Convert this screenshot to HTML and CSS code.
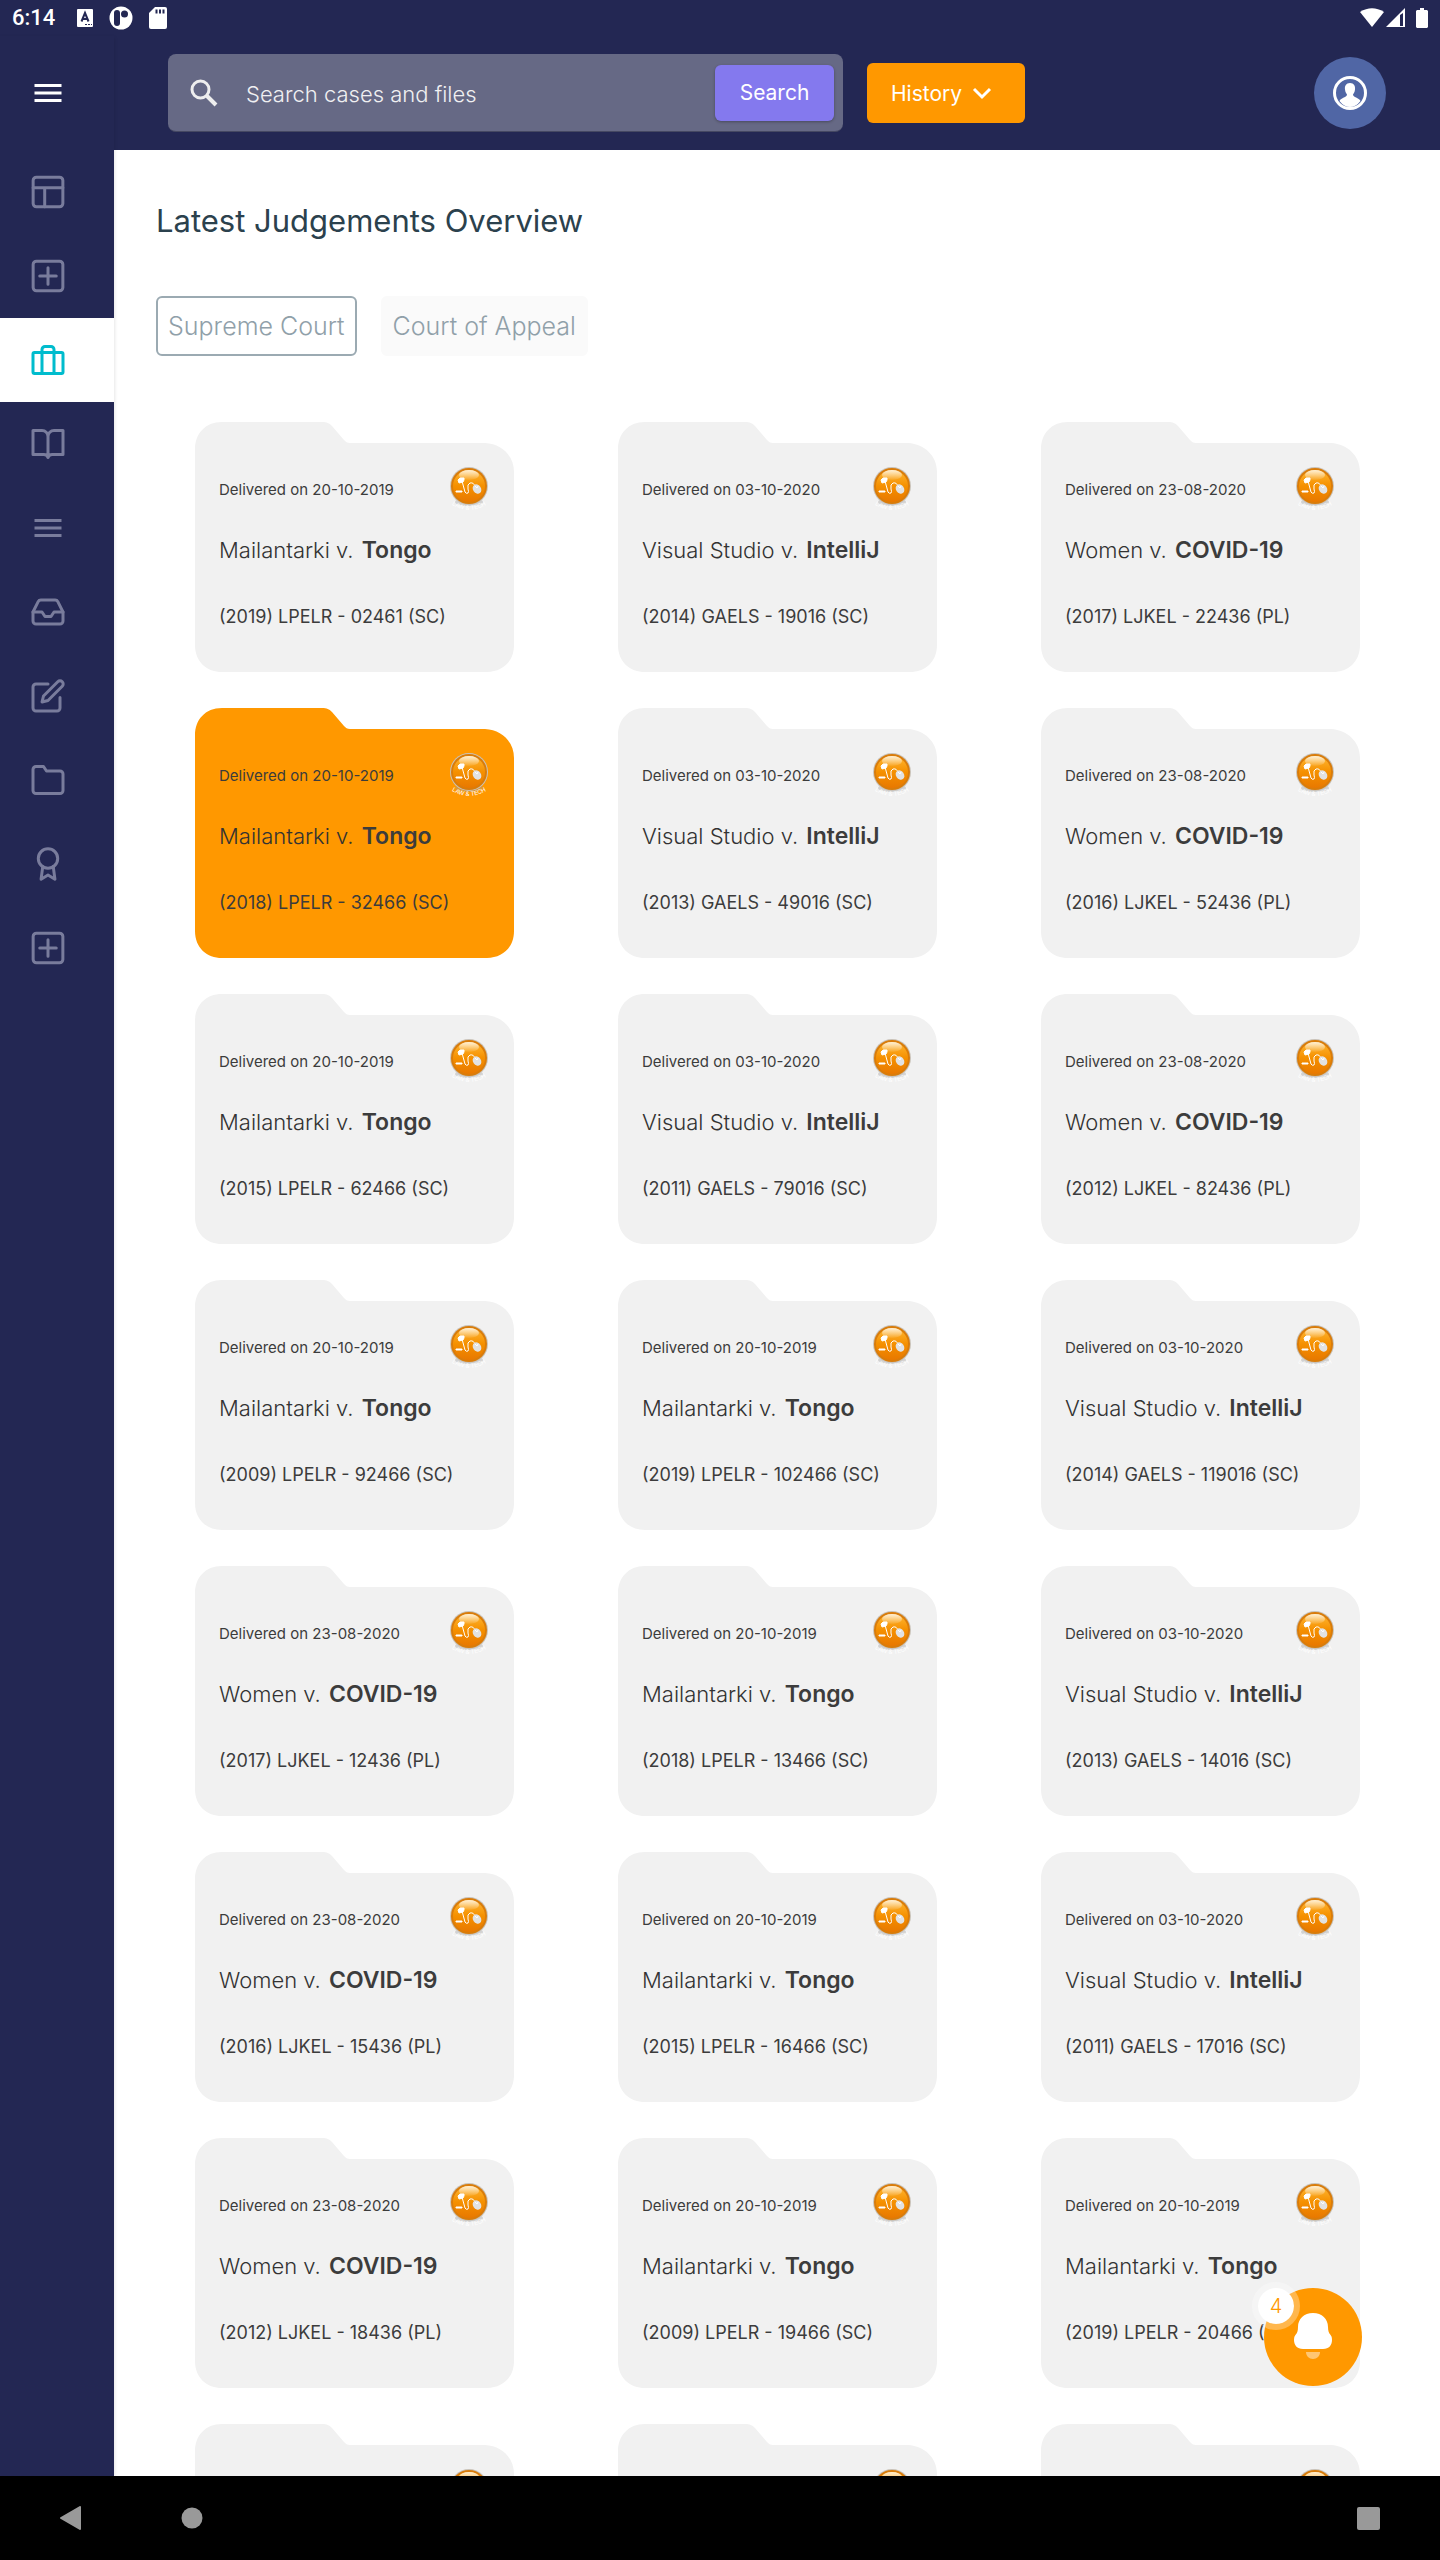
FILE: index.html
```html
<!DOCTYPE html>
<html lang="en">
<head>
<meta charset="utf-8">
<meta name="viewport" content="width=device-width, initial-scale=1">
<title>Latest Judgements Overview</title>
<link rel="stylesheet" href="styles.css">
</head>
<body>
<svg class="defs" aria-hidden="true">
  <defs>
    <linearGradient id="orb" x1="0" y1="0" x2="0" y2="1">
      <stop offset="0" stop-color="#ffb733"/><stop offset="0.5" stop-color="#f59000"/><stop offset="1" stop-color="#e87800"/>
    </linearGradient>
    <linearGradient id="gloss" x1="0" y1="0" x2="0" y2="1">
      <stop offset="0" stop-color="#fff" stop-opacity="0.8"/><stop offset="1" stop-color="#fff" stop-opacity="0.05"/>
    </linearGradient>
    <path id="arc" d="M0 37Q20 51 40 37"/>
    <symbol id="seal" viewBox="0 0 40 48">
      <ellipse cx="20" cy="36" rx="14" ry="4" fill="#999" opacity="0.35"/>
      <circle cx="20" cy="20" r="19" fill="#c9c2b8"/>
      <circle cx="20" cy="20" r="18" fill="#d97c0a"/>
      <circle cx="20" cy="20" r="16" fill="url(#orb)"/>
      <ellipse cx="20" cy="9" rx="10" ry="5" fill="url(#gloss)"/>
      <path d="M9 14l2-2h4v2l-1 2-4 1zM7 25h6v1H7z" fill="#fff" stroke="#fff" stroke-width="1"/>
      <path d="M13 15l3 11q1 2 3 1 1-1 0-4-1-5 2-6 4-1 5 4" fill="none" stroke="#fff" stroke-width="1"/>
      <ellipse cx="28" cy="23" rx="4" ry="5" fill="#e2e2e2" transform="rotate(-35 28 23)"/>
      <path d="M26 20l2 2 1-2" fill="none" stroke="#fff" stroke-width="1"/>
    </symbol>
  </defs>
</svg>

<div class="status">
  <span class="clock">6:14</span>
  <svg width="16" height="18" viewBox="0 0 16 18"><rect width="16" height="18" rx="1" fill="#fff"/><path d="M4.500 12.500L8 4l3.500 8.500M5.800 10h4.400" fill="none" stroke="#232753" stroke-width="2"/><path d="M8 15.500h7" stroke="#232753" stroke-dasharray="2 1"/></svg>
  <svg width="24" height="24" viewBox="0 0 24 24"><circle cx="12" cy="12" r="11.500" fill="#fff"/><rect x="5" y="4" width="6" height="16" rx="3" fill="#232753"/><circle cx="15.500" cy="8" r="3.500" fill="#232753"/></svg>
  <svg width="18" height="22" viewBox="0 0 18 22"><path d="M6 0h10a2 2 0 0 1 2 2v18a2 2 0 0 1-2 2H2a2 2 0 0 1-2-2V6z" fill="#fff"/><path d="M7.500 2.500v4M11 2.500v4M14.500 2.500v4" stroke="#232753" stroke-width="2"/></svg>
  <span class="spacer"></span>
  <svg class="signal" width="46" height="20" viewBox="0 0 46 20"><path d="M0 4Q12-3.500 24 4L12 19z" fill="#fff"/><path d="M26 19L45 0V19z" fill="#fff"/><path d="M40 7l3-2v13h-3z" fill="#232753"/></svg>
  <svg width="12" height="20" viewBox="0 0 12 20"><path d="M4 0h4v2h3l1 1v16l-1 1H1l-1-1V3l1-1h3z" fill="#fff"/></svg>
</div>

<nav class="side" aria-label="Main">
  <button class="side-item toggle" type="button" aria-label="Menu"><svg class="ic" viewBox="0 0 24 24"><path class="flat" d="M3 7h18M3 12h18M3 17h18"/></svg></button>
  <a class="side-item" href="#" aria-label="Dashboard"><svg class="ic" viewBox="1.100 1.100 21.800 21.800"><rect x="3" y="3" width="18" height="18" rx="2"/><path d="M3 9.500h18M10 21V10"/></svg></a>
  <a class="side-item" href="#" aria-label="Add"><svg class="ic" viewBox="1.100 1.100 21.800 21.800"><rect x="3" y="3" width="18" height="18" rx="2"/><path d="M12 7v10M7 12h10"/></svg></a>
  <a class="side-item active" href="#" aria-label="Cases"><svg class="ic" viewBox="0 0 24 24"><rect x="2" y="7" width="20" height="14" rx="1"/><path d="M16 21V5a2 2 0 0 0-2-2h-4a2 2 0 0 0-2 2v16"/></svg></a>
  <a class="side-item" href="#" aria-label="Library"><svg class="ic" viewBox="0 0 24 24"><path d="M2 3h6a4 4 0 0 1 4 4v14a3 3 0 0 0-3-2H2zM22 3h-6a4 4 0 0 0-4 4v14a3 3 0 0 1 3-2h7z"/></svg></a>
  <a class="side-item" href="#" aria-label="List"><svg class="ic" viewBox="0 0 24 24"><path class="flat" d="M3 7h18M3 12h18M3 17h18"/></svg></a>
  <a class="side-item" href="#" aria-label="Inbox"><svg class="ic" viewBox="0 0 24 24"><path d="M22 12h-6l-2 3h-4l-2-3H2"/><path d="M5.450 5.110L2 12v6a2 2 0 0 0 2 2h16a2 2 0 0 0 2-2v-6l-3.450-6.890A2 2 0 0 0 16.760 4H7.240a2 2 0 0 0-1.790 1.110z"/></svg></a>
  <a class="side-item" href="#" aria-label="Notes"><svg class="ic" viewBox="0 0 24 24"><path d="M12 4H4a2 2 0 0 0-2 2v14a2 2 0 0 0 2 2h14a2 2 0 0 0 2-2v-7"/><path d="M18.500 2.500a2.121 2.121 0 0 1 3 3L12 15l-4 1 1-4z"/></svg></a>
  <a class="side-item" href="#" aria-label="Files"><svg class="ic" viewBox="0 0 24 24"><path d="M22 19a2 2 0 0 1-2 2H4a2 2 0 0 1-2-2V5a2 2 0 0 1 2-2h5l2 3h9a2 2 0 0 1 2 2z"/></svg></a>
  <a class="side-item" href="#" aria-label="Awards"><svg class="ic" viewBox="-1 -1 26 26"><circle cx="12" cy="8" r="7"/><path d="M8.210 13.890L7 23l5-3 5 3-1.210-9.120"/></svg></a>
  <a class="side-item" href="#" aria-label="New"><svg class="ic" viewBox="1.100 1.100 21.800 21.800"><rect x="3" y="3" width="18" height="18" rx="2"/><path d="M12 7v10M7 12h10"/></svg></a>
</nav>

<header class="top">
  <form class="search">
    <svg width="28" height="28" viewBox="0 0 28 28"><circle cx="10.500" cy="10.500" r="8.500" fill="none" stroke="#eee" stroke-width="3"/><path d="M17 17l9 9" stroke="#eee" stroke-width="4"/></svg>
    <input type="text" aria-label="Search cases and files" placeholder="Search cases and files">
    <button type="button">Search</button>
  </form>
  <button class="history" type="button">History
    <svg width="20" height="14" viewBox="0 0 20 14"><path d="M2 3l8 8 8-8" fill="none" stroke="#fff" stroke-width="3"/></svg>
  </button>
  <button class="avatar" type="button" aria-label="Account">
    <svg width="34" height="34" viewBox="0 0 34 34"><circle cx="17" cy="17" r="15.500" fill="none" stroke="#fff" stroke-width="3"/><path d="M17 7c4 0 5.500 3 5 6.500-.3 3-1.500 4-2 5 0 3 6 3 7.500 6.500Q23 31 17 31T6.500 25c1.500-3.500 7.500-3.500 7.500-6.500-.5-1-1.700-2-2-5C11.500 10 13 7 17 7z" fill="#fff"/></svg>
  </button>
</header>

<main class="main">
  <h1>Latest Judgements Overview</h1>
  <div class="tabs">
    <button class="tab selected" type="button">Supreme Court</button>
    <button class="tab" type="button">Court of Appeal</button>
  </div>
  <div class="cards">
    <article class="card"><div class="meta"><span>Delivered on 20-10-2019</span><svg class="seal"><use href="#seal"/><text><textPath href="#arc" startOffset="50%">LAW &amp; TECH</textPath></text></svg></div><h2>Mailantarki v. <b>Tongo</b></h2><p>(2019) LPELR - 02461 (SC)</p></article>
    <article class="card"><div class="meta"><span>Delivered on 03-10-2020</span><svg class="seal"><use href="#seal"/><text><textPath href="#arc" startOffset="50%">LAW &amp; TECH</textPath></text></svg></div><h2>Visual Studio v. <b>IntelliJ</b></h2><p>(2014) GAELS - 19016 (SC)</p></article>
    <article class="card"><div class="meta"><span>Delivered on 23-08-2020</span><svg class="seal"><use href="#seal"/><text><textPath href="#arc" startOffset="50%">LAW &amp; TECH</textPath></text></svg></div><h2>Women v. <b>COVID-19</b></h2><p>(2017) LJKEL - 22436 (PL)</p></article>

    <article class="card highlight"><div class="meta"><span>Delivered on 20-10-2019</span><svg class="seal"><use href="#seal"/><text><textPath href="#arc" startOffset="50%">LAW &amp; TECH</textPath></text></svg></div><h2>Mailantarki v. <b>Tongo</b></h2><p>(2018) LPELR - 32466 (SC)</p></article>
    <article class="card"><div class="meta"><span>Delivered on 03-10-2020</span><svg class="seal"><use href="#seal"/><text><textPath href="#arc" startOffset="50%">LAW &amp; TECH</textPath></text></svg></div><h2>Visual Studio v. <b>IntelliJ</b></h2><p>(2013) GAELS - 49016 (SC)</p></article>
    <article class="card"><div class="meta"><span>Delivered on 23-08-2020</span><svg class="seal"><use href="#seal"/><text><textPath href="#arc" startOffset="50%">LAW &amp; TECH</textPath></text></svg></div><h2>Women v. <b>COVID-19</b></h2><p>(2016) LJKEL - 52436 (PL)</p></article>

    <article class="card"><div class="meta"><span>Delivered on 20-10-2019</span><svg class="seal"><use href="#seal"/><text><textPath href="#arc" startOffset="50%">LAW &amp; TECH</textPath></text></svg></div><h2>Mailantarki v. <b>Tongo</b></h2><p>(2015) LPELR - 62466 (SC)</p></article>
    <article class="card"><div class="meta"><span>Delivered on 03-10-2020</span><svg class="seal"><use href="#seal"/><text><textPath href="#arc" startOffset="50%">LAW &amp; TECH</textPath></text></svg></div><h2>Visual Studio v. <b>IntelliJ</b></h2><p>(2011) GAELS - 79016 (SC)</p></article>
    <article class="card"><div class="meta"><span>Delivered on 23-08-2020</span><svg class="seal"><use href="#seal"/><text><textPath href="#arc" startOffset="50%">LAW &amp; TECH</textPath></text></svg></div><h2>Women v. <b>COVID-19</b></h2><p>(2012) LJKEL - 82436 (PL)</p></article>

    <article class="card"><div class="meta"><span>Delivered on 20-10-2019</span><svg class="seal"><use href="#seal"/><text><textPath href="#arc" startOffset="50%">LAW &amp; TECH</textPath></text></svg></div><h2>Mailantarki v. <b>Tongo</b></h2><p>(2009) LPELR - 92466 (SC)</p></article>
    <article class="card"><div class="meta"><span>Delivered on 20-10-2019</span><svg class="seal"><use href="#seal"/><text><textPath href="#arc" startOffset="50%">LAW &amp; TECH</textPath></text></svg></div><h2>Mailantarki v. <b>Tongo</b></h2><p>(2019) LPELR - 102466 (SC)</p></article>
    <article class="card"><div class="meta"><span>Delivered on 03-10-2020</span><svg class="seal"><use href="#seal"/><text><textPath href="#arc" startOffset="50%">LAW &amp; TECH</textPath></text></svg></div><h2>Visual Studio v. <b>IntelliJ</b></h2><p>(2014) GAELS - 119016 (SC)</p></article>

    <article class="card"><div class="meta"><span>Delivered on 23-08-2020</span><svg class="seal"><use href="#seal"/><text><textPath href="#arc" startOffset="50%">LAW &amp; TECH</textPath></text></svg></div><h2>Women v. <b>COVID-19</b></h2><p>(2017) LJKEL - 12436 (PL)</p></article>
    <article class="card"><div class="meta"><span>Delivered on 20-10-2019</span><svg class="seal"><use href="#seal"/><text><textPath href="#arc" startOffset="50%">LAW &amp; TECH</textPath></text></svg></div><h2>Mailantarki v. <b>Tongo</b></h2><p>(2018) LPELR - 13466 (SC)</p></article>
    <article class="card"><div class="meta"><span>Delivered on 03-10-2020</span><svg class="seal"><use href="#seal"/><text><textPath href="#arc" startOffset="50%">LAW &amp; TECH</textPath></text></svg></div><h2>Visual Studio v. <b>IntelliJ</b></h2><p>(2013) GAELS - 14016 (SC)</p></article>

    <article class="card"><div class="meta"><span>Delivered on 23-08-2020</span><svg class="seal"><use href="#seal"/><text><textPath href="#arc" startOffset="50%">LAW &amp; TECH</textPath></text></svg></div><h2>Women v. <b>COVID-19</b></h2><p>(2016) LJKEL - 15436 (PL)</p></article>
    <article class="card"><div class="meta"><span>Delivered on 20-10-2019</span><svg class="seal"><use href="#seal"/><text><textPath href="#arc" startOffset="50%">LAW &amp; TECH</textPath></text></svg></div><h2>Mailantarki v. <b>Tongo</b></h2><p>(2015) LPELR - 16466 (SC)</p></article>
    <article class="card"><div class="meta"><span>Delivered on 03-10-2020</span><svg class="seal"><use href="#seal"/><text><textPath href="#arc" startOffset="50%">LAW &amp; TECH</textPath></text></svg></div><h2>Visual Studio v. <b>IntelliJ</b></h2><p>(2011) GAELS - 17016 (SC)</p></article>

    <article class="card"><div class="meta"><span>Delivered on 23-08-2020</span><svg class="seal"><use href="#seal"/><text><textPath href="#arc" startOffset="50%">LAW &amp; TECH</textPath></text></svg></div><h2>Women v. <b>COVID-19</b></h2><p>(2012) LJKEL - 18436 (PL)</p></article>
    <article class="card"><div class="meta"><span>Delivered on 20-10-2019</span><svg class="seal"><use href="#seal"/><text><textPath href="#arc" startOffset="50%">LAW &amp; TECH</textPath></text></svg></div><h2>Mailantarki v. <b>Tongo</b></h2><p>(2009) LPELR - 19466 (SC)</p></article>
    <article class="card"><div class="meta"><span>Delivered on 20-10-2019</span><svg class="seal"><use href="#seal"/><text><textPath href="#arc" startOffset="50%">LAW &amp; TECH</textPath></text></svg></div><h2>Mailantarki v. <b>Tongo</b></h2><p>(2019) LPELR - 20466 (SC)</p></article>

    <article class="card"><div class="meta"><span></span><svg class="seal"><use href="#seal"/></svg></div></article>
    <article class="card"><div class="meta"><span></span><svg class="seal"><use href="#seal"/></svg></div></article>
    <article class="card"><div class="meta"><span></span><svg class="seal"><use href="#seal"/></svg></div></article>
  </div>
</main>

<button class="fab" type="button" aria-label="Notifications">
  <svg width="40" height="48" viewBox="0 0 40 48"><path d="M20 0c9 0 15 6 15 14 0 9 4 6 4 13 0 5-3 9-9 9H10c-6 0-9-4-9-9 0-7 4-4 4-13C5 6 11 0 20 0z" fill="#fff"/><path d="M13 39h14c0 4-3 7-7 7s-7-3-7-7z" fill="#fff" opacity="0.45"/></svg>
  <span class="badge">4</span>
</button>

<footer class="system">
  <button type="button" aria-label="Back"><svg width="22" height="24" viewBox="0 0 22 24"><path d="M1 12L20 1v22z" fill="#999" stroke="#999" stroke-width="2" stroke-linejoin="round"/></svg></button>
  <button type="button" aria-label="Home"><svg width="22" height="22" viewBox="0 0 22 22"><circle cx="11" cy="11" r="10.500" fill="#999"/></svg></button>
  <span class="spacer"></span>
  <button type="button" aria-label="Recent apps"><svg width="23" height="23" viewBox="0 0 23 23"><rect width="23" height="23" rx="2" fill="#999"/></svg></button>
</footer>
</body>
</html>
```

FILE: styles.css
```css
* { box-sizing: border-box; }

body {
  margin: 0;
  height: 100vh;
  display: grid;
  grid-template-columns: 114px 1fr;
  grid-template-rows: 36px 114px 1fr 84px;
  grid-template-areas: "status status" "side top" "side main" "system system";
  font-family: Inter, "Liberation Sans", sans-serif;
  font-weight: 400;
  color: #3c3c3c;
  background: #fff;
  position: relative;
}

button { font: inherit; border: 0; padding: 0; background: none; cursor: pointer; }
h1, h2, p { margin: 0; font-weight: 400; }
svg { flex: none; display: block; }
.defs { position: absolute; width: 0; height: 0; }
.spacer { flex: 1; }

.status {
  grid-area: status;
  display: flex;
  align-items: center;
  gap: 16px;
  padding: 0 12px;
  background: #232753;
  color: #fff;
}
.clock { font: 500 22px/36px Roboto, sans-serif; margin-right: 6px; }
.signal { margin-right: -6px; }

.side {
  grid-area: side;
  display: flex;
  flex-direction: column;
  background: #232753;
  box-shadow: 0 2px 4px rgba(0, 0, 0, 0.15);
  z-index: 1;
}
.side-item {
  height: 84px;
  flex: none;
  display: flex;
  align-items: center;
  padding-left: 30px;
  color: #797c9c;
}
.side-item.toggle { height: 114px; color: #fff; }
.side-item.active { background: #fff; color: #00bccd; }
.ic {
  width: 36px;
  height: 36px;
  fill: none;
  stroke: currentColor;
  stroke-width: 3px;
  stroke-linecap: round;
  stroke-linejoin: round;
}
.ic * { vector-effect: non-scaling-stroke; }
.ic .flat { stroke-linecap: butt; }

.top {
  grid-area: top;
  display: flex;
  align-items: center;
  padding: 0 54px;
  background: #232753;
}
.search {
  flex: 0 1 675px;
  height: 78px;
  display: flex;
  align-items: center;
  padding: 0 9px 0 22px;
  border-radius: 8px;
  background: #666985;
  border-bottom: 1px solid #454862;
}
.search input {
  flex: 1;
  min-width: 0;
  margin-left: 28px;
  padding: 2px 0 0;
  border: 0;
  outline: 0;
  background: none;
  color: #eee;
  font: inherit;
  font-size: 22px;
  font-weight: 300;
}
.search input::placeholder { color: #f0f0f2; opacity: 1; }
.search button {
  width: 119px;
  height: 56px;
  border-radius: 6px;
  background: #8479ee;
  color: #fff;
  font-size: 21px;
  box-shadow: 0 1px 3px rgba(0, 0, 0, 0.3);
}
.history {
  width: 158px;
  height: 60px;
  margin-left: 24px;
  padding-left: 24px;
  display: flex;
  align-items: center;
  gap: 10px;
  border-radius: 6px;
  background: #ff9800;
  color: #fff;
  font-size: 21px;
}
.avatar {
  width: 72px;
  height: 72px;
  margin-left: auto;
  display: grid;
  place-items: center;
  border-radius: 50%;
  background: #5066a5;
}

.main {
  grid-area: main;
  min-height: 0;
  overflow: hidden;
  padding: 52px 28px 0 29px;
}
h1 { padding-left: 13px; font-size: 31px; line-height: 38px; color: #2b414d; }
.tabs { display: flex; gap: 24px; padding: 56px 13px 0; }
.tab {
  height: 60px;
  padding: 0 10px;
  border: 2px solid #fafafa;
  border-radius: 6px;
  background: #fafafa;
  color: #90a0a9;
  font-size: 25px;
  font-weight: 300;
}
.tab.selected { border-color: #9baab2; background: #fff; }

.cards {
  display: grid;
  grid-template-columns: repeat(3, 1fr);
  justify-items: center;
  row-gap: 36px;
  padding-top: 66px;
}
.card {
  width: 319px;
  height: 250px;
  padding: 44px 25px 0 24px;
  background: #f1f1f1;
  clip-path: path("M27 0H127C132 0 134 1 137 4L149 18C151 20 152 21 155 21H290C307 22 319 34 319 50V223C319 240 307 250 292 250H27C12 250 0 240 0 223V27C0 12 10 0 27 0Z");
}
.card.highlight { background: #ff9800; }
.meta { display: flex; justify-content: space-between; height: 48px; font-size: 15px; line-height: 48px; }
.seal { width: 40px; height: 48px; overflow: visible; }
.seal text { font-size: 6px; line-height: 8px; text-anchor: middle; fill: #fff; }
.card h2 { margin-top: 20px; font-size: 22px; font-weight: 300; line-height: 32px; color: #333; white-space: nowrap; }
.card b { margin-left: 2px; font-size: 23px; font-weight: 600; color: #3c3c3c; }
.card p { margin-top: 37px; font-size: 18px; line-height: 28px; white-space: nowrap; }

.fab {
  position: absolute;
  right: 78px;
  bottom: 174px;
  width: 98px;
  height: 98px;
  display: grid;
  place-items: center;
  border-radius: 50%;
  background: #ff9800;
}
.badge {
  position: absolute;
  left: -12px;
  top: -6px;
  width: 48px;
  height: 48px;
  border: 6px solid rgba(255, 255, 255, 0.3);
  border-radius: 50%;
  background: #fff;
  background-clip: padding-box;
  color: #ff9800;
  font-size: 20px;
  font-weight: 300;
  line-height: 36px;
}

.system {
  grid-area: system;
  display: flex;
  align-items: center;
  gap: 99px;
  padding: 0 60px;
  background: #000;
}
```
